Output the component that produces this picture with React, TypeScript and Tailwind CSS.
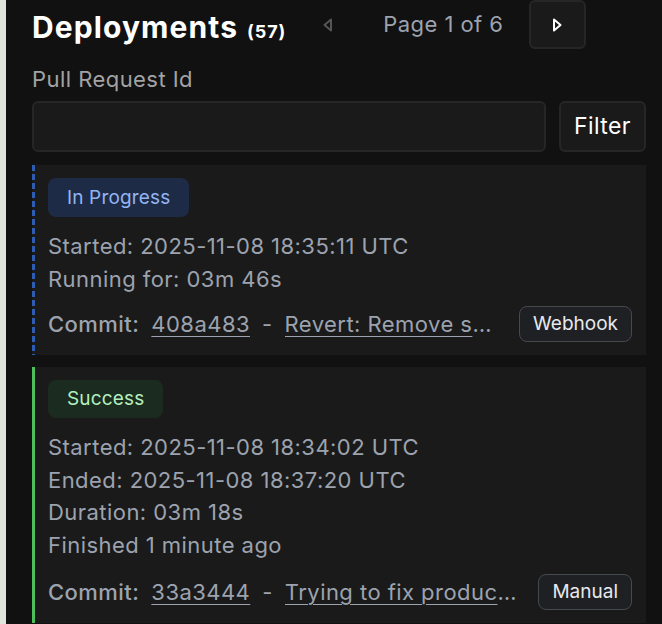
import React from "react";

function TriLeft({ className }: { className?: string }) {
  return (
    <svg width="11" height="16" viewBox="0 0 11 16" className={className} fill="none">
      <path d="M9 2.5 L2.5 8 L9 13.5 Z" stroke="currentColor" strokeWidth="2" strokeLinejoin="round" />
    </svg>
  );
}

function TriRight({ className }: { className?: string }) {
  return (
    <svg width="11" height="16" viewBox="0 0 11 16" className={className} fill="none">
      <path d="M2 2.5 L8.5 8 L2 13.5 Z" stroke="currentColor" strokeWidth="2" strokeLinejoin="round" />
    </svg>
  );
}

function CommitRow({ hash, msg, source }: { hash: string; msg: string; source: string }) {
  return (
    <div className="flex items-center gap-[17px]">
      <div className="flex min-w-0 flex-1 items-center gap-[12px] text-[22px] leading-[30px] tracking-[0.45px] text-[#9ca3af]">
        <span className="shrink-0 font-medium">Commit:</span>
        <span className="shrink-0 underline underline-offset-[4px] decoration-[1px]">{hash}</span>
        <span className="shrink-0">-</span>
        <span className="min-w-0 truncate underline underline-offset-[4px] decoration-[1px]">{msg}</span>
      </div>
      <span className="shrink-0 rounded-[8px] border-[1.5px] border-[#464950] bg-[#1f2024] px-[13px] py-[4px] text-[19px] leading-[26px] text-[#e8e9ec]">
        {source}
      </span>
    </div>
  );
}

export default function App() {
  return (
    <div
      className="flex h-[624px] w-[662px] overflow-hidden bg-[#e0e5dc]"
      style={{ fontFamily: "Inter, 'Noto Sans', sans-serif" }}
    >
      <div className="ml-[6px] flex min-w-0 flex-1 flex-col bg-[#111111] pl-[26px] pr-[16px]">
        {/* Header */}
        <div className="flex h-[49px] items-center gap-[13px]">
          <div className="flex items-baseline gap-[9px] pt-[7px]">
            <h1 className="text-[30px] font-bold leading-none tracking-[1.1px] text-white">Deployments</h1>
            <span className="text-[18px] font-bold tracking-[0.9px] text-white">(57)</span>
          </div>
          <div className="flex items-center">
            <button className="flex h-[49px] w-[56px] items-center justify-center text-[#555555]">
              <TriLeft />
            </button>
            <span className="ml-[28px] mr-[26px] text-[22px] tracking-[0.45px] text-[#9ca3af]">Page 1 of 6</span>
            <button className="flex h-[49px] w-[57px] items-center justify-center rounded-[6px] border-[2px] border-[#262626] bg-[#1a1a1a] text-white">
              <TriRight />
            </button>
          </div>
        </div>

        {/* Filter */}
        <label className="mt-[16px] text-[22px] leading-[28px] tracking-[0.45px] text-[#a3a3a3]">Pull Request Id</label>
        <div className="mt-[8px] flex gap-[13px]">
          <input className="h-[51px] flex-1 rounded-[6px] border-[2px] border-[#262626] bg-[#1a1a1a] px-3 text-[22px] text-white outline-none" />
          <button className="h-[51px] w-[87px] rounded-[6px] border-[2px] border-[#262626] bg-[#1a1a1a] text-[23px] tracking-[0.4px] text-white">
            Filter
          </button>
        </div>

        {/* Cards */}
        <div className="mt-[13px] flex flex-col gap-[12px]">
          <div className="flex bg-[#1a1a1a]">
            <div className="w-[3px] shrink-0 bg-[repeating-linear-gradient(to_bottom,#2d5cb0_0px,#2d5cb0_6px,transparent_6px,transparent_9px)]" />
            <div className="min-w-0 flex-1 py-[13px] pl-[13px] pr-[14px]">
              <span className="inline-block rounded-[8px] bg-[#1e2b46] px-[19px] text-[19px] leading-[39px] tracking-[0.15px] text-[#93b5f3]">
                In Progress
              </span>
              <div className="mt-[13px] text-[22px] leading-[32.5px] tracking-[0.45px] text-[#9ca3af]">
                <div>Started: 2025-11-08 18:35:11 UTC</div>
                <div>Running for: 03m 46s</div>
              </div>
              <div className="mt-[11px]">
                <CommitRow hash="408a483" msg="Revert: Remove service worker registration" source="Webhook" />
              </div>
            </div>
          </div>

          <div className="flex bg-[#1a1a1a]">
            <div className="w-[3px] shrink-0 bg-[#4cbf5a]" />
            <div className="min-w-0 flex-1 py-[13px] pl-[13px] pr-[14px]">
              <span className="inline-block rounded-[8px] bg-[#1c2b20] px-[19px] text-[19px] leading-[38px] tracking-[0.15px] text-[#b3efbd]">
                Success
              </span>
              <div className="mt-[13px] text-[22px] leading-[32.7px] tracking-[0.45px] text-[#9ca3af]">
                <div>Started: 2025-11-08 18:34:02 UTC</div>
                <div>Ended: 2025-11-08 18:37:20 UTC</div>
                <div>Duration: 03m 18s</div>
                <div>Finished 1 minute ago</div>
              </div>
              <div className="mt-[12px]">
                <CommitRow hash="33a3444" msg="Trying to fix production build issues" source="Manual" />
              </div>
            </div>
          </div>
        </div>
      </div>
    </div>
  );
}
